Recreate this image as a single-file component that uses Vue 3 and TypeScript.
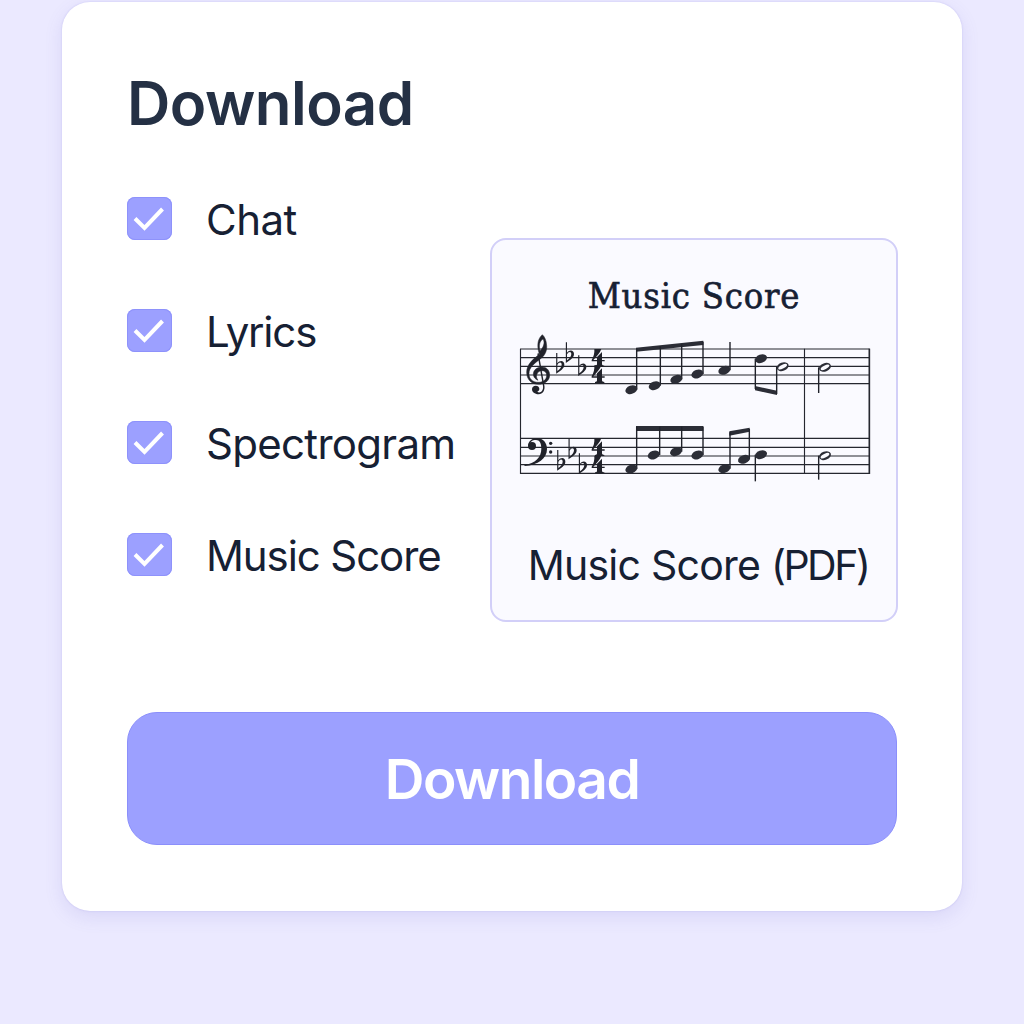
<script setup lang="ts">
import { ref } from 'vue'

interface Option {
  label: string
  cls: string
}

const options: Option[] = [
  { label: 'Chat', cls: 'chat' },
  { label: 'Lyrics', cls: 'lyrics' },
  { label: 'Spectrogram', cls: 'spectrogram' },
  { label: 'Music Score', cls: 'score' },
]
const checked = ref<boolean[]>([true, true, true, true])

// Engraving units: three per CSS pixel.
interface Note {
  x: number
  y: number
  stemX: number
  stemEnd: number
  half?: boolean
}

const staffLines: number[] = [72, 98, 124, 150, 176, 340, 367, 393, 419, 445]

const notes: Note[] = [
  { x: 364, y: 194, stemX: 380, stemEnd: 70 },
  { x: 434, y: 182, stemX: 451, stemEnd: 64 },
  { x: 499, y: 163, stemX: 515, stemEnd: 58 },
  { x: 562, y: 147, stemX: 579, stemEnd: 50 },
  { x: 643, y: 136, stemX: 660, stemEnd: 51 },
  { x: 753, y: 101, stemX: 736, stemEnd: 192 },
  { x: 818, y: 125, stemX: 800, stemEnd: 207, half: true },
  { x: 945, y: 127, stemX: 926, stemEnd: 204, half: true },
  { x: 364, y: 432, stemX: 380, stemEnd: 305 },
  { x: 431, y: 390, stemX: 449, stemEnd: 305 },
  { x: 498, y: 380, stemX: 515, stemEnd: 305 },
  { x: 562, y: 390, stemX: 579, stemEnd: 305 },
  { x: 643, y: 431, stemX: 660, stemEnd: 322 },
  { x: 702, y: 403, stemX: 718, stemEnd: 312 },
  { x: 753, y: 389, stemX: 736, stemEnd: 469 },
  { x: 945, y: 392, stemX: 926, stemEnd: 464, half: true },
]

const flats: [number, number][] = [
  [140, 143],
  [169, 111],
  [206, 150],
  [143, 434],
  [177, 400],
  [208, 444],
]

const fours: [number, number][] = [
  [245, 72],
  [245, 121],
  [245, 340],
  [245, 392],
]
</script>

<template>
  <main class="page">
    <section class="card">
      <h1 class="title"><span>Download</span></h1>
      <div class="content">
        <ul class="options">
          <li v-for="(option, i) in options" :key="option.label">
            <label class="option">
              <input v-model="checked[i]" type="checkbox" class="native" />
              <span class="box">
                <svg v-if="checked[i]" viewBox="0 0 45 43" width="45" height="43">
                  <path d="M8 21.500 L17.500 31 L35.500 12" fill="none" stroke="#fff" stroke-width="4" />
                </svg>
              </span>
              <span class="label" :class="option.cls">{{ option.label }}</span>
            </label>
          </li>
        </ul>
        <figure class="preview">
          <div class="sheet-title"><span>Music Score</span></div>
          <svg class="sheet" viewBox="-3 0 1110 480" width="370" height="160">
            <g fill="none" stroke="#25272f">
              <path v-for="y in staffLines" :key="y" :d="`M31 ${y}H1079`" stroke-width="3.3" />
              <path d="M31.500 71V447M883.500 71V447" stroke-width="3.4" />
              <path d="M1078 71V447" stroke-width="5" />
            </g>
            <g fill="#2b2d36" stroke="none">
              <path d="M378 68L580 47V60L378 80Z" />
              <path d="M735 183L801 197V210L735 196Z" />
              <path d="M378 303H580V318H378Z" />
              <path d="M658 319L719 308V320L658 332Z" />
            </g>
            <g v-for="(n, i) in notes" :key="i">
              <path :d="`M${n.stemX} ${n.y}V${n.stemEnd}`" stroke="#20222a" stroke-width="4.200" />
              <g :transform="`translate(${n.x} ${n.y}) rotate(-20)`">
                <ellipse rx="18.500" ry="12.500" fill="#2b2d36" />
                <ellipse v-if="n.half" rx="14.500" ry="5.500" fill="#fafaff" transform="rotate(-8)" />
              </g>
            </g>
            <!-- treble clef -->
            <g fill="#20222a" transform="translate(-2 0)">
              <path
                d="M99 29C87 40 83 55 87 76L90 88C70 103 52 119 52 142C52 164 67 178 87 178C108 178 121 166 121 150C121 135 111 126 98 126C82 126 72 136 72 147C72 156 77 162 86 166C81 158 80 153 83 147C86 140 91 137 98 137C107 137 112 143 112 151C112 164 102 172 87 172C70 172 59 162 59 146C59 128 75 115 94 101C108 90 113 77 112 62C111 46 106 35 99 29ZM101 42C106 49 105 61 97 72L92 78C88 61 91 48 101 42Z"
                stroke="#20222a" stroke-width="1.500"
              />
              <path
                d="M88 84L105 181C108 196 100 208 88 208C76 208 68 201 68 193C68 186 73 182 79 182C86 182 91 187 90 193C89 197 87 199 84 200C91 206 103 199 101 183L84 86Z"
              />
            </g>
            <!-- bass clef -->
            <g fill="#20222a">
              <circle cx="66" cy="363" r="12" />
              <path
                d="M55 362C54 348 67 340 81 340C100 340 111 354 111 372C111 400 84 421 44 423L43 420C76 415 94 397 94 371C94 355 89 345 78 345C66 345 59 351 60 361Z"
              />
              <circle cx="122" cy="355" r="5" />
              <circle cx="122" cy="381" r="5" />
            </g>
            <g v-for="([x, y], i) in flats" :key="`f${i}`" :transform="`translate(${x} ${y})`">
              <path
                d="M-1.500 -59H2V-28C9 -38 23 -37 23 -24C23 -12 10 -6 -1.500 3ZM2 -5C9 -10 15 -17 15 -24C15 -33 6 -32 2 -23Z"
                fill="#20222a"
                fill-rule="evenodd"
              />
            </g>
            <g v-for="([x, y], i) in fours" :key="`t${i}`" :transform="`translate(${x} ${y})`">
              <path
                d="M8 0H29C25 12 14 23 5 33H16V24L31 9V33H39V37H31V45C31 49 34 50 38 50V53H10V50C14 50 16 49 16 45V37H0V33C6 23 9 13 8 0Z"
                fill="#20222a"
              />
            </g>
          </svg>
          <figcaption class="caption">Music Score <span class="format">(PDF)</span></figcaption>
        </figure>
      </div>
      <button class="download" type="button"><span>Download</span></button>
    </section>
  </main>
</template>

<style>
body {
  margin: 0;
  background: #ebe9ff;
}
</style>

<style scoped>
.page {
  box-sizing: border-box;
  width: 1024px;
  height: 1024px;
  padding: 2px 62px 0;
  overflow: hidden;
  background: #ebe9ff;
  font-family: Inter, "Liberation Sans", sans-serif;
  color: #162033;
}
.card {
  box-sizing: border-box;
  width: 900px;
  height: 909px;
  padding: 65px 65px 0;
  border-radius: 28px;
  background: #fff;
  box-shadow: 0 0 2px rgba(120, 110, 220, 0.28), 0 6px 18px rgba(100, 90, 190, 0.13);
}
.title {
  margin: 0;
  height: 72px;
  font-size: 60px;
  line-height: 72px;
  font-weight: 600;
  letter-spacing: -0.5px;
  color: #243044;
  white-space: nowrap;
}
.content {
  display: flex;
  justify-content: space-between;
  height: 481px;
  margin-top: 58px;
}
.options {
  display: flex;
  flex-direction: column;
  gap: 69px;
  margin: 0;
  padding: 0;
  list-style: none;
}
.option {
  display: flex;
  align-items: center;
  height: 43px;
  gap: 34px;
}
.native {
  display: none;
}
.box {
  box-sizing: border-box;
  width: 45px;
  height: 43px;
  border-radius: 8px;
  background: #9ca0ff;
  box-shadow: inset 0 0 0 1px #8e92fb;
}
.box svg {
  display: block;
}
.label {
  padding-top: 3px;
  font-size: 42px;
  line-height: 44px;
  white-space: nowrap;
}
.chat {
  letter-spacing: -0.5px;
}
.lyrics {
  letter-spacing: -1.2px;
}
.spectrogram {
  letter-spacing: -0.7px;
}
.score {
  letter-spacing: -1.1px;
}
.preview {
  box-sizing: border-box;
  display: flex;
  flex-direction: column;
  align-items: center;
  width: 408px;
  height: 384px;
  margin: 41px -1px 0 0;
  border: 2px solid #d2cff8;
  border-radius: 16px;
  background: #fafaff;
}
.sheet-title {
  height: 50px;
  margin-top: 31px;
  font-family: "DejaVu Serif Condensed", "DejaVu Serif", serif;
  font-stretch: condensed;
  font-size: 36px;
  line-height: 49px;
  letter-spacing: 0.8px;
  -webkit-text-stroke: 0.6px #162033;
  white-space: nowrap;
}
.sheet {
  display: block;
  width: 370px;
  height: 160px;
  margin-top: 4px;
}
.caption {
  height: 50px;
  margin-top: 55px;
  padding-left: 8px;
  font-size: 41px;
  line-height: 50px;
  letter-spacing: -0.75px;
  white-space: nowrap;
}
.format {
  letter-spacing: -2.5px;
}
.download {
  display: block;
  width: 770px;
  height: 133px;
  margin-top: 34px;
  padding: 2px 0 0;
  border: 1px solid #8b8ffb;
  border-radius: 30px;
  background: #9ca0ff;
  color: #fff;
  font-family: inherit;
  font-size: 55px;
  font-weight: 600;
  line-height: 129px;
  letter-spacing: -1.5px;
  text-align: center;
}
</style>
